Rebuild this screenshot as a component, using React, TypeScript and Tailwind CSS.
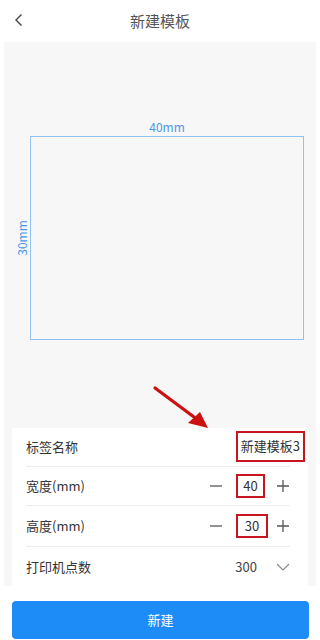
import React from 'react';

const font = { fontFamily: '"Noto Sans CJK SC", "Noto Sans", sans-serif' };

const Minus = () => (
  <svg width="14" height="14" viewBox="0 0 14 14" className="text-[#555]">
    <path d="M1 7h12" stroke="currentColor" strokeWidth="1.3" />
  </svg>
);

const Plus = () => (
  <svg width="14" height="14" viewBox="0 0 14 14" className="text-[#555]">
    <path d="M1 7h12M7 1v12" stroke="currentColor" strokeWidth="1.3" />
  </svg>
);

const Stepper = ({ value, boxClass }: { value: string; boxClass: string }) => (
  <div className="flex items-center">
    <Minus />
    <div className={`ml-[13px] flex h-[24px] items-center justify-center border-2 border-[#c4161c] text-[13px] text-[#333] ${boxClass}`}>
      {value}
    </div>
    <Plus />
  </div>
);

export default function App() {
  return (
    <div className="flex h-[640px] w-[320px] flex-col bg-white" style={font}>
      {/* header */}
      <div className="relative flex h-[42px] shrink-0 items-center justify-center">
        <svg width="10" height="14" viewBox="0 0 10 14" className="absolute left-[14px] top-[13px] text-[#444]">
          <path d="M7.5 1.5L2 7l5.5 5.5" fill="none" stroke="currentColor" strokeWidth="1.4" />
        </svg>
        <span className="text-[15px] text-[#555]">新建模板</span>
      </div>

      {/* preview panel */}
      <div className="mx-1 flex h-[544px] flex-col bg-[#f7f7f7] px-2">
        <div className="flex flex-1 flex-col pl-[18px] pt-[76px]">
          <div className="flex w-[274px] justify-center text-[12px] leading-[18px] text-[#4d97e6]">40mm</div>
          <div className="relative h-[204px] w-[274px] border-[1.5px] border-[#92c2f0]">
            <span className="absolute left-[-27px] top-[92px] -rotate-90 text-[12px] leading-[18px] text-[#4d97e6]">30mm</span>
          </div>
          {/* annotation arrow */}
          <div className="relative flex-1">
            <svg width="70" height="50" viewBox="0 0 70 50" className="absolute left-[120px] top-[44px]">
              <path d="M5 4L48 36" stroke="#cc1111" strokeWidth="3.2" strokeLinecap="round" />
              <path d="M58 44L38 39L50 28Z" fill="#cc1111" />
            </svg>
          </div>
        </div>

        {/* form card */}
        <div className="bg-white pl-[14px] pr-[18px] text-[13px] text-[#333]">
          <div className="flex h-[39px] items-center justify-between border-b border-[#eeeeee]">
            <span>标签名称</span>
            <div className="mr-[-15px] mt-[-2px] flex h-[31px] items-center border-2 border-[#c4161c] px-[3px]">新建模板3</div>
          </div>
          <div className="flex h-[39px] items-center justify-between border-b border-[#eeeeee]">
            <span>宽度(mm)</span>
            <Stepper value="40" boxClass="w-[29px] mr-[11px]" />
          </div>
          <div className="flex h-[41px] items-center justify-between border-b border-[#eeeeee]">
            <span>高度(mm)</span>
            <Stepper value="30" boxClass="w-[32px] mr-[8px]" />
          </div>
          <div className="flex h-[39px] items-center justify-between">
            <span>打印机点数</span>
            <div className="flex items-center">
              <span className="text-[#444]">300</span>
              <svg width="14" height="8" viewBox="0 0 14 8" className="ml-[19px] text-[#888]">
                <path d="M1 1l6 6 6-6" fill="none" stroke="currentColor" strokeWidth="1.1" />
              </svg>
            </div>
          </div>
        </div>
      </div>

      {/* button */}
      <div className="px-3 pt-[15px]">
        <button className="flex h-[38px] w-[297px] items-center justify-center rounded-[4px] bg-[#1e8cf7] text-[13px] text-white">
          新建
        </button>
      </div>
    </div>
  );
}
